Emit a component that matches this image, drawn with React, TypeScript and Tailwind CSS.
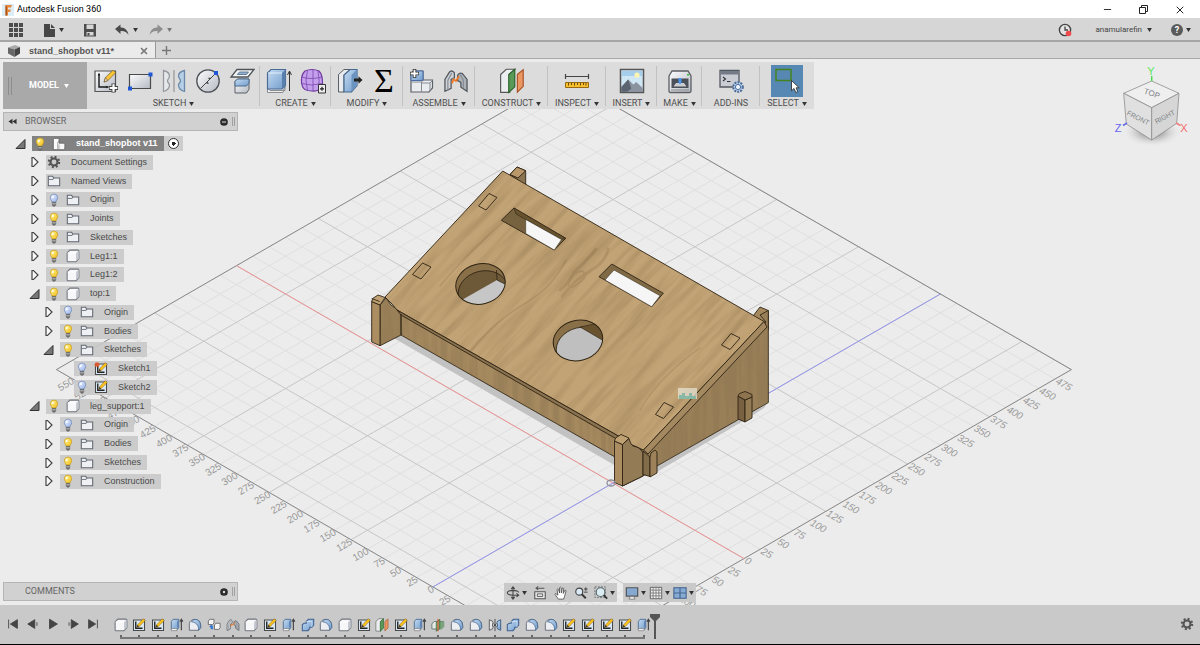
import { ReactNode, useState } from 'react';
import { Minus, X } from 'lucide-react';
import { clsx } from 'clsx';

// Shared gradients and grain, referenced by id from every icon
function SharedDefs() {
  return (
    <svg className="absolute size-0" aria-hidden="true">
      <defs>
        <linearGradient id="metal" x1="0" y1="0" x2="1" y2="1">
          <stop offset="0" stopColor="#fdfdfe" />
          <stop offset="1" stopColor="#b4b9c2" />
        </linearGradient>
        <linearGradient id="steel" x1="0" y1="0" x2="1" y2="1">
          <stop offset="0" stopColor="#c6dcf2" />
          <stop offset="1" stopColor="#6f9bcb" />
        </linearGradient>
        <linearGradient id="bulbOn" x1="0" y1="0" x2="1" y2="1">
          <stop offset="0" stopColor="#fff7a0" />
          <stop offset="1" stopColor="#f3bd12" />
        </linearGradient>
        <linearGradient id="bulbOff" x1="0" y1="0" x2="1" y2="1">
          <stop offset="0" stopColor="#f4f8ff" />
          <stop offset="1" stopColor="#92b0ea" />
        </linearGradient>
      </defs>
    </svg>
  );
}

interface IconProps {
  className?: string;
}

function Svg({ size = 16, className, children }: { size?: number; className?: string; children: ReactNode }) {
  return (
    <svg viewBox={`0 0 ${size} ${size}`} className={clsx('shrink-0', className)} fill="none" aria-hidden="true">
      {children}
    </svg>
  );
}

function Caret({ className = 'text-[#333]' }: IconProps) {
  return (
    <svg viewBox="0 0 6 5" className={clsx('h-[4px] w-[5px] shrink-0', className)} aria-hidden="true">
      <path d="M0 0h6L3 5z" fill="currentColor" />
    </svg>
  );
}

// ---- small icons (16 grid) ----

function Bulb({ on }: { on: boolean }) {
  return (
    <Svg className="size-[14px]">
      <path
        d="M8 1.200a4.200 4.200 0 0 0-4.200 4.200c0 1.900 1.600 2.800 2 5h4.400c.4-2.200 2-3.100 2-5A4.200 4.200 0 0 0 8 1.200z"
        fill={on ? 'url(#bulbOn)' : 'url(#bulbOff)'}
        stroke={on ? '#c99b1c' : '#7288b8'}
        strokeWidth=".9"
      />
      <path d="M6 10.700h4v3L9 15H7l-1-1.300z" fill="#777" stroke="#555" strokeWidth=".6" />
      <path d="M6 12.300h4" stroke="#ddd" strokeWidth=".7" />
      <circle cx="6.700" cy="4.500" r="1.200" fill="#fff" />
    </Svg>
  );
}

function Folder() {
  return (
    <Svg className="size-[14px]">
      <path d="M1.500 13.500v-11h5l1 2h7v9z" fill="#eef0f3" stroke="#626872" strokeWidth="1.200" />
      <path d="M2 6.200h5l1-1.700" stroke="#626872" />
    </Svg>
  );
}

function Cube({ className = 'size-[14px]' }: IconProps) {
  return (
    <Svg className={className}>
      <path d="M1.300 4.500 4.500 1.300h9q1.200 0 1.200 1.200v8.500l-3.200 3.500h-9q-1.200 0-1.200-1.200z" fill="#f7f7f9" stroke="#70747c" strokeWidth="1.200" />
      <path d="M11.500 4.600v9.400l3-3.300V2z" fill="#c3c7cf" />
      <path d="M1.800 4.500h9.700" stroke="#fff" />
    </Svg>
  );
}

function Component() {
  return (
    <Svg className="size-[14px]">
      <path d="M1.500 3 3 1.500h5V7h5.500l1.200 1.200v5L13 14.500H1.500z" fill="#fafafa" stroke="#666" />
      <path d="M8 4.500 6.500 6v8.500M8 8.500v6" stroke="#888" strokeWidth=".8" />
    </Svg>
  );
}

function Gear({ className = 'size-[14px]' }: IconProps) {
  return (
    <Svg className={className}>
      <circle cx="8" cy="8" r="5.800" stroke="#555" strokeWidth="2.600" strokeDasharray="2.200 2.350" />
      <circle cx="8" cy="8" r="4" stroke="#555" strokeWidth="2.400" />
    </Svg>
  );
}

function Sketch({ alert, className = 'size-[15px]' }: IconProps & { alert?: boolean }) {
  return (
    <Svg className={className}>
      <path d="M1.700 2.200h12.600v12H1.700z" fill="#d9e8f4" stroke="#4a4a4a" strokeWidth="1.200" />
      <path d="M4.300 4v7.700H12" stroke="#222" strokeWidth="1.600" />
      <path d="m5.500 10.600.9-2.800L13 .8l2 2-6.800 7z" fill="#ffc61a" stroke="#8a5b13" strokeWidth=".6" />
      <path d="m5.500 10.600.9-2.800 1.800 2z" fill="#333" />
      {alert && <path d="M3.500 0v6M.5 3h6M1.400.9l4.200 4.200M5.600.9 1.400 5.100" stroke="#e0592c" strokeWidth="1.200" />}
    </Svg>
  );
}

function Extrude({ className = 'size-[15px]' }: IconProps) {
  return (
    <Svg className={className}>
      <path d="M1.500 4 3.500 1.500H10V11l-2 2.500H1.500z" fill="url(#steel)" stroke="#4a6891" />
      <path d="M8 4v7l2-2V2z" fill="#5f86b4" />
      <path d="M1.500 12h6.500v2.500H1.500z" fill="#eee" stroke="#777" strokeWidth=".7" />
      <path d="M13 14V2M11.300 4.200 13 1.600l1.700 2.600" stroke="#444" strokeWidth="1.300" />
    </Svg>
  );
}

function Fillet({ className = 'size-[15px]' }: IconProps) {
  return (
    <Svg className={className}>
      <path d="M1.500 14V6.500C2 3 5 1.500 8 1.500c4 0 6.500 3 6.500 6.500v3L12 14z" fill="#eceef1" stroke="#5c6470" />
      <path d="M4 4.300C6 1 10 1.200 12 3c2 1.700 2.500 4 2.500 8L12 14c.5-6-3-9-8-9.700z" fill="url(#steel)" stroke="#486892" strokeWidth=".9" />
    </Svg>
  );
}

function Combine({ className = 'size-[15px]' }: IconProps) {
  return (
    <Svg className={className}>
      <path d="M1.500 7.500 3.500 6H6V4l2.500-2.500H14.500V8l-2 2.500H10V12l-2 2.500H1.500z" fill="url(#steel)" stroke="#3f6092" strokeWidth="1.200" />
      <path d="M6 4h6.500v6.500" stroke="#d5e5f8" strokeWidth=".8" />
    </Svg>
  );
}

function JointOrigin({ className = 'size-[15px]' }: IconProps) {
  return (
    <Svg className={className}>
      <path d="M1.500 3.500 3 1.500h5v4l-1.500 2h-5zM8.500 8 10 6h5v5l-1.500 2h-5z" fill="#f5f5f5" stroke="#666" />
      <path d="M5 9v3h2M3.300 10.500 5 8.500l1.800 2" stroke="#3677cf" strokeWidth="1.500" />
    </Svg>
  );
}

function Joint({ className = 'size-[15px]' }: IconProps) {
  return (
    <Svg className={className}>
      <path d="M1.200 14.300V7L4 2.500q2-1.500 3 .5v3L5 7v5.500z" fill="#cfd2d6" stroke="#555a61" strokeWidth=".8" />
      <path d="M14.800 14.300V7L12 3.500q-2-1-3 1v3.300l2 1v3z" fill="#adb2b9" stroke="#555a61" strokeWidth=".8" />
      <path d="M3 14V7.500L5.500 3M12.500 12.500V7.500L10.500 4" stroke="#858a92" strokeWidth=".7" />
      <path d="m5.500 9.500 1-2.500 1.500 1 1.800-3" stroke="#f07824" strokeWidth="1.100" />
    </Svg>
  );
}

function OffsetPlane({ className = 'size-[15px]' }: IconProps) {
  return (
    <Svg className={className}>
      <path d="M1 4 4.500 .8h5.300L6.600 4v11H1z" fill="#eceef1" stroke="#555" strokeWidth=".7" />
      <path d="m6 4 3.700-3.200v10.800L6 15z" fill="#5a9a58" stroke="#286328" strokeWidth=".7" />
      <path d="m11.300 4 3.600-3v10.300l-3.600 3.500z" fill="#ea9762" stroke="#a85125" strokeWidth=".7" />
    </Svg>
  );
}

function SplitBody({ className = 'size-[15px]' }: IconProps) {
  return (
    <Svg className={className}>
      <path d="M1 6.500 4 4h10.500v6L12 12.500H1z" fill="#e4ece3" stroke="#566" strokeWidth=".9" />
      <path d="M8 4.500 14.500 4v6L12 12.500H8z" fill="#79a779" />
      <path d="m6 5 4-3.500V12l-4 3z" fill="#8eb58a" stroke="#396839" strokeWidth=".9" />
      <path d="M8 1v14" stroke="#dc4b25" strokeWidth="1.200" />
    </Svg>
  );
}

function MirrorSmall({ className = 'size-[15px]' }: IconProps) {
  return (
    <Svg className={className}>
      <path d="M1.500 2 5 3.500q1.500 1.500 0 4.500 1.500 3 0 4.500L1.500 14z" fill="#e4e6e9" stroke="#555" />
      <path d="M14.500 2 11 3.500Q9.500 5 11 8q-1.500 3 0 4.500l3.500 1.500z" fill="url(#steel)" stroke="#35587f" />
      <path d="M8 1v14M6.300 6.300l3.400 3.400M9.700 6.300 6.300 9.700" stroke="#444" />
    </Svg>
  );
}

// ---- ribbon icons (26 grid) ----

function CreateSketch() {
  return (
    <Svg size={26} className="size-[26px]">
      <path d="M2 3h20.500v20.500H2z" fill="url(#metal)" stroke="#555" strokeWidth="1.200" />
      <path d="M6 6v13h8" stroke="#161616" strokeWidth="1.400" />
      <path d="m4.800 7.500 1.200-3 1.200 3zM13.500 17.800l3 1.200-3 1.200z" fill="#161616" />
      <path d="m11 14 1.500-4.300L20 2.200l2.600 2.600-7.700 7.700z" fill="#fbc738" stroke="#84612a" strokeWidth=".8" />
      <path d="m11 14 1.500-4.300 2.400 2.800z" fill="#f6dfb8" stroke="#5d4a2b" strokeWidth=".6" />
      <path d="M20.500 15.500v9M16 20h9" stroke="#444" strokeWidth="4" />
      <path d="M20.500 16.200v7.600M16.700 20h7.600" stroke="#fff" strokeWidth="2.200" />
    </Svg>
  );
}

function Rectangle() {
  return (
    <Svg size={26} className="size-[26px]">
      <path d="M2.500 6.500h21v14h-21z" fill="url(#metal)" stroke="#4a4a4a" strokeWidth="1.200" />
      <path d="M1 18.500h4v4H1zM21.500 4.500h4v4h-4z" fill="#1f58d6" />
    </Svg>
  );
}

function Mirror() {
  return (
    <Svg size={26} className="size-[26px]">
      <path d="M2.500 2.500c4 1 6 3 6 5.500 0 2-2 3-2 5s2 2 2 4c0 3-2.500 5.500-6 6.500z" fill="#e6e7e9" stroke="#96999e" strokeWidth="1.300" />
      <path d="M23.500 2.500c-4 1-6 3-6 5.500 0 2 2 3 2 5s-2 2-2 4c0 3 2.500 5.500 6 6.500z" fill="#b5cfe6" stroke="#6b89a8" strokeWidth="1.300" />
      <path d="M13 2v22" stroke="#999" strokeWidth="1.300" />
    </Svg>
  );
}

function Circle() {
  return (
    <Svg size={26} className="size-[26px]">
      <circle cx="13" cy="13" r="11.200" fill="url(#metal)" stroke="#4e5158" strokeWidth="1.300" />
      <path d="M5.500 20.500 20 6" stroke="#444" />
      <path d="m11.500 16 .6-2.600 2 2zM15.500 9.500l-2.600.6 2 2z" fill="#444" />
      <path d="M19 3h4v4h-4z" fill="#1f58d6" />
    </Svg>
  );
}

function Project() {
  return (
    <Svg size={26} className="size-[26px]">
      <path d="M8 1.500h17L19 9H2z" fill="#f4f5f6" stroke="#4f5359" strokeWidth="1.300" />
      <path d="M10.500 4h9l-2 2.500H8.300z" fill="#91b3d6" stroke="#53687c" strokeWidth=".8" />
      <path d="M6 13.500 8.500 11H20v10.500L17.500 25H6z" fill="url(#metal)" stroke="#5a5e65" />
      <path d="M6 13.500 8.500 11H20v4l-2.500 3H6z" fill="url(#steel)" stroke="#4d6c90" />
    </Svg>
  );
}

function ExtrudeLarge() {
  return (
    <Svg size={26} className="size-[26px]">
      <path d="M1.500 20 4 22.500h15v-4L17 24.500H1.500z" fill="#eee" stroke="#8b8e93" />
      <path d="M1.500 5 5 1.500h14.500v16L16 21H1.500z" fill="url(#steel)" stroke="#4a6b93" strokeWidth="1.200" />
      <path d="m16 5 3.500-3.500v16L16 21z" fill="#587fae" />
      <path d="M2 5h14" stroke="#e3effb" />
      <path d="M23.500 23V4M21.500 7l2-4 2 4" stroke="#333" />
    </Svg>
  );
}

function Form() {
  return (
    <Svg size={26} className="size-[26px]">
      <path d="M5 3q7-3 14 0 4 4 3.500 15Q19 24 12 23 3 23 2 17 0 8 5 3z" fill="#c49fec" stroke="#6e399f" strokeWidth="1.200" />
      <path d="M2 9q8 3 20 0M1.500 15.500q10 3 21 0M7.500 2.300q-3 10 0 20M13 2q0 10 0 21M18 3q2 10 .5 18" stroke="#8250b5" strokeWidth=".9" />
      <path d="M18.500 16.500h7v8.500h-7z" fill="#eee" stroke="#333" />
      <path d="M20 20.800h4M22 18.800v4" stroke="#222" strokeWidth="1.200" />
    </Svg>
  );
}

function PressPull() {
  return (
    <Svg size={26} className="size-[26px]">
      <path d="M1.500 6.500 7 1.500h6l-6 5.500v17H1.500z" fill="#e9ebee" stroke="#5b6066" />
      <path d="m7 7 6-5.500h7v16L14.500 24H7z" fill="url(#steel)" stroke="#44688f" strokeWidth="1.200" />
      <path d="m14.500 7 5.500-5.500v16L14.500 24z" fill="#6c94c1" />
      <path d="M17 10.500h4.500V8.300l4 3.700-4 3.700v-2.200H17z" fill="#222" />
    </Svg>
  );
}

function NewComponent() {
  return (
    <Svg size={26} className="size-[26px]">
      <path d="M2 5.500 4.500 3H14v9h9.500V20L20 24H2z" fill="#e9ebef" stroke="#5c6068" strokeWidth="1.200" />
      <path d="M2 5.500 4.500 3H14v9.500H2z" fill="url(#steel)" stroke="#4b6da8" />
      <path d="M12.500 14v10M2 14h10.500l2-2M12.500 15h8.500l2.500-2.500M21 15v8" stroke="#868b94" />
      <path d="M5.500 1v9M1 5.500h9" stroke="#333" strokeWidth="3.600" />
      <path d="M5.500 1.700v7.600M1.700 5.500h7.600" stroke="#fff" strokeWidth="1.800" />
    </Svg>
  );
}

function Measure() {
  return (
    <Svg size={26} className="size-[26px]">
      <path d="M1.500 6v5M24.500 6v5M1.500 8.500h23" stroke="#444" strokeWidth="1.200" />
      <path d="M1.500 14.500h23v5h-23z" fill="#f8c02f" stroke="#966a12" />
      <path d="M4.500 15v2.500M7.500 15v2M10.500 15v2.500M13.500 15v2M16.500 15v2.500M19.500 15v2M22 15v2.500" stroke="#6a4a0c" />
    </Svg>
  );
}

function Picture() {
  return (
    <Svg size={26} className="size-[26px]">
      <path d="M1.500 1.500h23v23h-23z" fill="#cfe6f5" stroke="#555" strokeWidth="1.500" />
      <path d="M3 3h20v5H3z" fill="#a5cdec" />
      <circle cx="18" cy="7" r="2.600" fill="#fff5b0" />
      <path d="m2.300 19 7-7.500 5 5 3-2.500 6.400 6v4H2.300z" fill="#8b939e" />
      <path d="m2.300 19 7-7.500 3 9-4 3.300h-6z" fill="#5a6370" />
    </Svg>
  );
}

function Printer() {
  return (
    <Svg size={26} className="size-[26px]">
      <path d="m2 8 3-5h16l3 5v15q0 1.500-1.500 1.500h-19Q2 24.500 2 23z" fill="url(#metal)" stroke="#5b5e63" strokeWidth="1.300" />
      <path d="M4.500 10.500h17V20h-17z" fill="#4b4f57" />
      <path d="M6.500 18.500 9 15h8l2.500 3.500z" fill="#c9ccd2" />
      <path d="M11.500 10h3v4.500L13 16.500l-1.500-2z" fill="#4a94ec" />
      <path d="M20 6h2v1.500h-2z" fill="#35c235" />
      <path d="M4 22h18" stroke="#888" />
    </Svg>
  );
}

function Scripts() {
  return (
    <Svg size={26} className="size-[26px]">
      <path d="M2 2.500h19V19H2z" fill="#c9ccd3" stroke="#545962" strokeWidth="1.300" />
      <path d="M2.500 3h18v3.500h-18z" fill="#747b87" />
      <path d="m5 9 2.500 2L5 13M9 13.500h3.500" stroke="#333" strokeWidth="1.100" />
      <circle cx="20" cy="19" r="4.700" fill="#d4e4fa" stroke="#496c9d" strokeWidth="2.200" strokeDasharray="2 1" />
      <circle cx="20" cy="19" r="2.600" fill="#eef5ff" stroke="#496c9d" />
    </Svg>
  );
}

function SelectArrow() {
  return (
    <Svg size={30} className="size-[30px]">
      <path d="M4 3.500h15v11H4z" stroke="#44821f" strokeWidth="1.500" />
      <path d="M19.500 14.500v10.300l2.500-2.300 1.800 4 2-.9-1.800-3.800h3.200z" fill="#fff" stroke="#333" strokeWidth=".9" />
    </Svg>
  );
}

// ---- ribbon ----

interface RibbonGroupProps {
  label: string;
  width: string;
  menu?: boolean;
  selected?: boolean;
  tools: { name: string; icon: ReactNode }[];
}

const RIBBON: RibbonGroupProps[] = [
  {
    label: 'SKETCH',
    width: 'w-[173px]',
    menu: true,
    tools: [
      { name: 'Create sketch', icon: <CreateSketch /> },
      { name: 'Rectangle', icon: <Rectangle /> },
      { name: 'Mirror', icon: <Mirror /> },
      { name: 'Circle', icon: <Circle /> },
      { name: 'Project', icon: <Project /> },
    ],
  },
  {
    label: 'CREATE',
    width: 'w-[71px]',
    menu: true,
    tools: [
      { name: 'Extrude', icon: <ExtrudeLarge /> },
      { name: 'Create form', icon: <Form /> },
    ],
  },
  {
    label: 'MODIFY',
    width: 'w-[72px]',
    menu: true,
    tools: [
      { name: 'Press pull', icon: <PressPull /> },
      {
        name: 'Parameters',
        icon: <span className="w-[26px] text-center font-['Liberation_Serif',serif] text-[34px] leading-[26px] text-black">Σ</span>,
      },
    ],
  },
  {
    label: 'ASSEMBLE',
    width: 'w-[72px]',
    menu: true,
    tools: [
      { name: 'New component', icon: <NewComponent /> },
      { name: 'Joint', icon: <Joint className="size-[26px]" /> },
    ],
  },
  { label: 'CONSTRUCT', width: 'w-[73px]', menu: true, tools: [{ name: 'Offset plane', icon: <OffsetPlane className="size-[26px]" /> }] },
  { label: 'INSPECT', width: 'w-[58px]', menu: true, tools: [{ name: 'Measure', icon: <Measure /> }] },
  { label: 'INSERT', width: 'w-[51px]', menu: true, tools: [{ name: 'Attached canvas', icon: <Picture /> }] },
  { label: 'MAKE', width: 'w-[45px]', menu: true, tools: [{ name: '3D print', icon: <Printer /> }] },
  { label: 'ADD-INS', width: 'w-[58px]', tools: [{ name: 'Scripts and add-ins', icon: <Scripts /> }] },
  { label: 'SELECT', width: 'w-[54px]', menu: true, selected: true, tools: [{ name: 'Select', icon: <SelectArrow /> }] },
];

function RibbonGroup({ label, width, menu, selected, tools }: RibbonGroupProps) {
  return (
    <div className={clsx('relative flex flex-col items-center justify-between pt-[3px]', width)}>
      <div className="flex h-[32px] items-center gap-[8px]">
        {tools.map((tool) => (
          <button key={tool.name} aria-label={tool.name} className={clsx('flex items-center', selected && 'bg-[#5788b3] p-px')}>
            {tool.icon}
          </button>
        ))}
      </div>
      <button className="flex items-center gap-[3px] text-[9px] leading-[11px] whitespace-nowrap text-[#4f4f4f]">
        {label}
        {menu && <Caret />}
      </button>
      {!selected && <span className="absolute top-[4px] right-0 h-[40px] w-px bg-[#c2c2c2]" />}
    </div>
  );
}

function Ribbon() {
  return (
    <nav aria-label="Tools" className="relative ml-[3px] flex h-[47px] w-max bg-[#dcdcdc]">
      <button className="flex w-[84px] items-center bg-[#a9a9a9] text-[9px] font-bold text-white">
        <span className="ml-[5px] h-[18px] w-[4px] border-x border-[#8d8d8d]" />
        <span className="ml-[17px]">MODEL</span>
        <Caret className="ml-[5px] text-white" />
      </button>
      {RIBBON.map((group) => (
        <RibbonGroup key={group.label} {...group} />
      ))}
    </nav>
  );
}

// ---- browser tree ----

type NodeKind = 'root' | 'settings' | 'views' | 'folder' | 'body' | 'sketch' | 'sketchAlert';

interface TreeNode {
  label: string;
  kind: NodeKind;
  level: number;
  open?: boolean;
  visible?: boolean;
}

const TREE: TreeNode[] = [
  { label: 'stand_shopbot v11', kind: 'root', level: 0, open: true, visible: true },
  { label: 'Document Settings', kind: 'settings', level: 1 },
  { label: 'Named Views', kind: 'views', level: 1 },
  { label: 'Origin', kind: 'folder', level: 1, visible: false },
  { label: 'Joints', kind: 'folder', level: 1, visible: true },
  { label: 'Sketches', kind: 'folder', level: 1, visible: true },
  { label: 'Leg1:1', kind: 'body', level: 1, visible: true },
  { label: 'Leg1:2', kind: 'body', level: 1, visible: true },
  { label: 'top:1', kind: 'body', level: 1, open: true, visible: true },
  { label: 'Origin', kind: 'folder', level: 2, visible: false },
  { label: 'Bodies', kind: 'folder', level: 2, visible: true },
  { label: 'Sketches', kind: 'folder', level: 2, open: true, visible: true },
  { label: 'Sketch1', kind: 'sketchAlert', level: 3, visible: false },
  { label: 'Sketch2', kind: 'sketch', level: 3, visible: false },
  { label: 'leg_support:1', kind: 'body', level: 1, open: true, visible: true },
  { label: 'Origin', kind: 'folder', level: 2, visible: false },
  { label: 'Bodies', kind: 'folder', level: 2, visible: true },
  { label: 'Sketches', kind: 'folder', level: 2, visible: true },
  { label: 'Construction', kind: 'folder', level: 2, visible: true },
];

const INDENT = ['pl-[15px]', 'pl-[29px]', 'pl-[43px]', 'pl-[57px]'];

const KIND_ICON: Record<NodeKind, ReactNode> = {
  root: <Component />,
  settings: <Gear />,
  views: <Folder />,
  folder: <Folder />,
  body: <Cube />,
  sketch: <Sketch className="size-[14px]" />,
  sketchAlert: <Sketch alert className="size-[14px]" />,
};

function Expander({ open, label }: { open?: boolean; label: string }) {
  return (
    <button aria-label={`Toggle ${label}`} aria-expanded={!!open} className="flex w-[17px] shrink-0">
      <Svg size={12} className="size-[12px]">
        {open ? (
          <path d="M10 1.500v9H1z" fill="#777" stroke="#333" />
        ) : (
          <path d="M3 1.500h1.500l4.500 4.500-4.500 4.500H3z" fill="#f8f8f8" stroke="#444" strokeWidth="1.200" />
        )}
      </Svg>
    </button>
  );
}

function TreeRow({ node }: { node: TreeNode }) {
  const isRoot = node.kind === 'root';
  const [visible, setVisible] = useState(node.visible);

  return (
    <li className={clsx('flex h-[15px] items-center', INDENT[node.level])}>
      {node.level < 3 ? <Expander open={node.open} label={node.label} /> : <span className="w-[17px]" />}
      <div
        className={clsx(
          "flex h-[15px] items-center pr-[6px] pl-px font-['Liberation_Sans',sans-serif] text-[9px] leading-[15px]",
          isRoot ? 'bg-[#828282] font-bold text-white' : 'bg-[#c9c9c9]/90 text-[#4a4a4a]'
        )}
      >
        {visible !== undefined && (
          <button aria-label={`Visibility of ${node.label}`} onClick={() => setVisible(!visible)} className="mr-[5px]">
            <Bulb on={visible} />
          </button>
        )}
        {KIND_ICON[node.kind]}
        <span className="ml-[10px] whitespace-nowrap">{node.label}</span>
      </div>
      {isRoot && (
        <span className="flex h-[15px] w-[19px] items-center justify-center bg-[#cdcdcd]">
          <input
            type="radio"
            name="active"
            aria-label="Activate component"
            defaultChecked
            className="size-[11px] appearance-none rounded-full border border-[#333] bg-[radial-gradient(circle,#222_2px,#fff_2px)]"
          />
        </span>
      )}
    </li>
  );
}

function PanelHeader({ title, collapsed }: { title: string; collapsed?: boolean }) {
  return (
    <div className="flex h-[19px] w-[235px] items-center border border-[#b5b5b5] bg-[#d1d1d1] pr-[2px] pl-[4px]">
      <span className="w-[17px]">
        {!collapsed && (
          <Svg size={10} className="size-[9px]">
            <path d="M5 2v6L.5 5zM9.500 2v6L5 5z" fill="#333" />
          </Svg>
        )}
      </span>
      <h2 className="flex-1 text-[9px] text-[#666]">{title}</h2>
      <button aria-label={`${title} options`} className="mr-[4px]">
        <Svg size={10} className="size-[8px]">
          <circle cx="5" cy="5" r="4.800" fill="#2c2c2c" />
          {collapsed ? <circle cx="5" cy="5" r="1.500" fill="#ddd" /> : <path d="M2.500 5h5" stroke="#ddd" strokeWidth="1.300" />}
        </Svg>
      </button>
      <span className="h-[9px] w-[3px] border-x border-[#a0a0a0]" />
    </div>
  );
}

// ---- 3D canvas ----

// One grid cell is 25 mm; u follows the red axis, v the blue one.
const CELL_X = 16.37;
const CELL_Y = 9.45;
const ORIGIN = { x: 613, y: 483 };
const U_MIN = -23;
const U_MAX = 8;
const V_MIN = -11;
const V_MAX = 20;

function project(u: number, v: number) {
  return { x: ORIGIN.x + (u + v) * CELL_X, y: ORIGIN.y + (u - v) * CELL_Y };
}

function range(from: number, to: number) {
  return Array.from({ length: to - from + 1 }, (_, i) => from + i);
}

function GridLine({ from, to, color }: { from: [number, number]; to: [number, number]; color: string }) {
  const a = project(...from);
  const b = project(...to);
  return <line x1={a.x} y1={a.y} x2={b.x} y2={b.y} stroke={color} />;
}

function Grid() {
  const us = range(U_MIN, U_MAX);
  const vs = range(V_MIN, V_MAX);
  const isMajor = (n: number) => n % 5 === 0;

  return (
    <g>
      {[false, true].map((major) => (
        <g key={String(major)}>
          {us.filter((u) => isMajor(u) === major).map((u) => (
            <GridLine key={u} from={[u, V_MIN]} to={[u, V_MAX]} color={major ? '#c6c6c6' : '#dfdfdf'} />
          ))}
          {vs.filter((v) => isMajor(v) === major).map((v) => (
            <GridLine key={v} from={[U_MIN, v]} to={[U_MAX, v]} color={major ? '#c6c6c6' : '#dfdfdf'} />
          ))}
        </g>
      ))}
      <GridLine from={[U_MIN, V_MIN]} to={[U_MAX, V_MIN]} color="#888" />
      <GridLine from={[U_MIN, V_MAX]} to={[U_MAX, V_MAX]} color="#888" />
      <GridLine from={[U_MIN, V_MIN]} to={[U_MIN, V_MAX]} color="#888" />
      <GridLine from={[U_MAX, V_MIN]} to={[U_MAX, V_MAX]} color="#888" />
      <GridLine from={[U_MIN, 0]} to={[U_MAX, 0]} color="#f09494" />
      <GridLine from={[0, V_MIN]} to={[0, V_MAX]} color="#9494ee" />

      <g fill="#999" fontSize="10" fontFamily="'Liberation Sans', sans-serif">
        {range(-22, 1).map((u) => {
          const p = project(u, V_MIN);
          return (
            <text key={u} transform={`translate(${p.x + 2} ${p.y + 4}) rotate(-30)`} textAnchor="end">
              {Math.abs(u * 25)}
            </text>
          );
        })}
        {range(-4, 19).map((v) => {
          const p = project(U_MAX, v);
          return (
            <text key={v} transform={`translate(${p.x} ${p.y + 4}) rotate(30)`} fontStyle="italic">
              {Math.abs(v * 25)}
            </text>
          );
        })}
      </g>
    </g>
  );
}

const TOP_FACE = 'M502.700 171 764 321.500 643.500 450 630 444 620 437 397 310 392 304 385 297z';
const SIDE_FACE = 'M643 450 766 322 760 315 768.300 310.500V402.500L657 466 643 476 622.500 486V444L629 438.500 634 446z';
const FRONT_FACE = 'M398 311 620 438V460L614.500 456.700 401 335z';

function WoodModel() {
  return (
    <g strokeLinejoin="round">
      <defs>
        <filter id="grain" x="0" y="0" width="100%" height="100%">
          <feTurbulence type="fractalNoise" baseFrequency="0.012 0.13" numOctaves="4" seed="7" />
          <feColorMatrix values="0 0 0 0 .3  0 0 0 0 .2  0 0 0 0 .09  2.600 0 0 0 -1.050" />
        </filter>
        {/* upright grain for the walls */}
        <filter id="wallGrain" x="0" y="0" width="100%" height="100%">
          <feTurbulence type="fractalNoise" baseFrequency="0.15 0.012" numOctaves="4" seed="3" />
          <feColorMatrix values="0 0 0 0 .25  0 0 0 0 .17  0 0 0 0 .08  3 0 0 0 -1.100" />
        </filter>
        <clipPath id="topClip"><path d={TOP_FACE} /></clipPath>
        <clipPath id="wallClip"><path d={`${SIDE_FACE}${FRONT_FACE}M380 305 386 298 401 314V335L380 345.700z`} /></clipPath>
        <clipPath id="hole1"><ellipse cx="480.500" cy="284" rx="25" ry="20" transform="rotate(-14 480.500 284)" /></clipPath>
        <clipPath id="hole2"><ellipse cx="578" cy="340.500" rx="25" ry="20" transform="rotate(-14 578 340.500)" /></clipPath>
      </defs>

      {/* ground shadow */}
      <path d="M392 337 401 335 614.500 456v9zM657 466 768 402.500 764 408 750 417 655 473z" fill="#c2c2c2" />

      <g stroke="#2e2414" strokeWidth=".9">
        {/* tabs behind the top plate */}
        <path d="M510 174.500 517 167 525.700 170.700V186z" fill="#8a7350" />
        <path d="M510 174.500 517 167 525.700 170.700 518 178z" fill="#b8976a" />
        <path d="m753 316 7-9 8.300 3.500V330z" fill="#a6885f" />

        <path d={SIDE_FACE} fill="#9a8059" />
        <path d={FRONT_FACE} fill="#a5895f" />
        <path d="M380 305 386 298 391 305 397 309 401 314V335L380 345.700z" fill="#9a8059" />
      </g>
      <g clipPath="url(#wallClip)">
        <rect x="360" y="280" width="420" height="220" filter="url(#wallGrain)" opacity=".4" />
      </g>

      {/* top plate */}
      <path d={TOP_FACE} fill="#c2a375" />
      <g clipPath="url(#topClip)">
        <g transform="translate(570 310) rotate(-47)">
          <rect x="-230" y="-230" width="460" height="460" filter="url(#grain)" opacity=".42" />
        </g>
        <g stroke="#65482a" strokeLinecap="round" opacity=".16" fill="none">
          <path d="M562 296q12-16 28-25t18-22M560 290q10-8 14-18 12-10 22-23" strokeWidth="3" />
          <path d="M470 352q24-30 54-48t42-44M440 286q26-32 66-66M640 410q20-34 60-62" strokeWidth="1.500" />
          <path d="M568 284q3-12 14-13 7 4-3 12t-11 1z" strokeWidth="1.500" />
        </g>
      </g>

      <g stroke="#2e2414" strokeWidth=".9">
        <path d={TOP_FACE} fill="none" />
        {/* plate thickness */}
        <path d="m764 321.500 3 5.500L648 454l-4.500-4z" fill="#a48960" />
        <path d="m397 310 223 127v4L401 315z" fill="#8b7350" />
        <path d="M401 335V314" />

        {/* legs */}
        <path d="m371.700 301.500 8.300 3.500v40.700l-8.300-3.700z" fill="#ac8d62" />
        <path d="m371.700 301.500 1-3 5.300-3.500 7 2.500-5 7.500z" fill="#c0a173" />
        <path d="m371.700 298.500 8 3" />
        <path d="m614.500 441 8 3.500V486l-8-3.500z" fill="#ac8d62" />
        <path d="m614.500 441 1-3 5.500-3.500 8 3.500-6.500 6.500z" fill="#c0a173" />
        <path d="M629 438.500q2 8 6 8t8 6V476L622.500 486V444.500z" fill="#937b55" />

        {/* tenons through the side */}
        <path d="m643 451 7 6v19.500l-7-2z" fill="#826b48" />
        <path d="m650 457 1-4 4-3 2 2v21l-7 4z" fill="#9c8159" />
        <path d="m738 396 7 4v22l-7-3z" fill="#786241" />
        <path d="m745 400 7-3v21l-7 4z" fill="#957b53" />
        <path d="m738 396 1.500-2.500 5.500-2 7 3v2.500l-7 3z" fill="#8f754f" />

        {/* tenons flush with the plate */}
        <g fill="none">
          <path d="m489 193.500 8 4L486 210l-7.500-4z" />
          <path d="m422.500 263 8.500 4-10 12-8.500-4.500z" />
          <path d="m731 333.500 9 4.500-10 11.500-8.500-4.500z" />
          <path d="m664 402.500 9.500 4.500-10 11.500-8-4z" />
        </g>

        {/* slots */}
        <path d="m514 208 51.700 30.300L554.300 250l-53-29.700z" fill="#77623f" />
        <path d="m514 208 51.700 30.300-4.200 1.200-35.800-20-9.700-5.500z" fill="#68532f" strokeWidth=".6" />
        <path d="m525.700 219.500 35.800 20-7.200 10.500-28.600-16.500z" fill="#f6f6f6" strokeWidth=".5" />
        <path d="m611.700 264 51.600 29.300-11.600 13.400L599 276.700z" fill="#806a45" />
        <path d="m614 270 46 25.700-8.300 11-46.700-26.700z" fill="#f6f6f6" strokeWidth=".5" />
      </g>

      {/* round openings */}
      <g clipPath="url(#hole1)">
        <path d="M450 260h60v50h-60z" fill="#8a7048" />
        <ellipse cx="483" cy="291" rx="25" ry="20" transform="rotate(-14 483 291)" fill="#6d5837" stroke="#2e2414" strokeWidth=".8" />
        <path d="M460 301 497 280 507 285V310H460z" fill="#c6c6c6" />
        <path d="m496.500 270 .5 10 10 5" fill="none" stroke="#2e2414" strokeWidth=".8" />
      </g>
      <g clipPath="url(#hole2)">
        <path d="M550 315h60v50h-60z" fill="#8a7048" />
        <ellipse cx="581" cy="347.500" rx="25" ry="20" transform="rotate(-14 581 347.500)" fill="#bfbfbf" stroke="#2e2414" strokeWidth=".8" />
        <path d="m580 327 24 14V322z" fill="#69522f" stroke="#2e2414" strokeWidth=".6" />
      </g>
      <g fill="none" stroke="#2e2414">
        <ellipse cx="480.500" cy="284" rx="25" ry="20" transform="rotate(-14 480.500 284)" />
        <ellipse cx="578" cy="340.500" rx="25" ry="20" transform="rotate(-14 578 340.500)" />
      </g>

      {/* joint glyph and origin marker */}
      <path d="M678 388h19v11h-19z" fill="#e6e2d2" opacity=".75" />
      <path d="M679 399v-4h3v-2h3v3h4v-3h3v3h4v3z" fill="#7fb5a4" opacity=".9" />
      <ellipse cx="611" cy="483" rx="4" ry="3" fill="none" stroke="#8f8f9c" strokeWidth="1.300" />
    </g>
  );
}

function ViewCube() {
  return (
    <svg viewBox="1112 62 80 90" className="h-[90px] w-[80px]" role="img" aria-label="View cube">
      <defs>
        <radialGradient id="cubeShadow">
          <stop offset=".3" stopColor="#777" stopOpacity=".6" />
          <stop offset="1" stopColor="#ececec" stopOpacity="0" />
        </radialGradient>
      </defs>
      <ellipse cx="1152" cy="132" rx="30" ry="15" fill="url(#cubeShadow)" />
      <g stroke="#8d8d8d" strokeWidth=".8" strokeLinejoin="round">
        <path d="m1151.700 81 27.300 12.300-27.300 14.400-28-14.400z" fill="#efefef" />
        <path d="m1123.700 93.300 28 14.400V140l-25.400-16z" fill="#e0e0e0" />
        <path d="m1179 93.300-27.300 14.400V140l25-16.700z" fill="#d6d6d6" />
      </g>
      <g fill="#808488" fontSize="8" fontFamily="'Liberation Sans', sans-serif" textAnchor="middle">
        <text transform="translate(1151 96) rotate(20)">TOP</text>
        <text transform="translate(1137 120) rotate(27)" fontSize="7">FRONT</text>
        <text transform="translate(1166 119) rotate(-28)" fontSize="7">RIGHT</text>
      </g>
      <path d="M1151.700 76v5" stroke="#4be04b" strokeWidth="1.500" />
      <path d="m1123 125.500 4-2.500" stroke="#6a6ae8" strokeWidth="1.500" />
      <path d="m1176 123 4.500 2.500" stroke="#ef7b7b" strokeWidth="1.500" />
      <g fontSize="11" fontFamily="'Liberation Sans', sans-serif" textAnchor="middle">
        <text x="1151" y="75" fill="#5de85d">Y</text>
        <text x="1118" y="132" fill="#6464ee">Z</text>
        <text x="1184" y="132" fill="#f26d6d">X</text>
      </g>
    </svg>
  );
}

// ---- view controls under the canvas ----

function NavButton({ name, menu, children }: { name: string; menu?: boolean; children: ReactNode }) {
  return (
    <button aria-label={name} className="flex items-center gap-[2px]">
      <Svg className="size-[14px]">{children}</Svg>
      {menu && <Caret />}
    </button>
  );
}

function ViewControls() {
  return (
    <div className="absolute inset-x-0 bottom-[3px] flex justify-center gap-[6px]">
      <div className="flex h-[19px] w-[113px] items-center justify-between bg-[#c9c9c9] px-[2px]">
        <NavButton name="Orbit" menu>
          <path d="M8 1v14M6 3.500 8 1l2 2.500M6 12.500 8 15l2-2.500M14.500 7.500c0-1.500-3-2.500-6.500-2.500S1.500 6 1.500 7.500 4 10.500 8 10.500h6M12 8.500l2.500 2-2.500 2" stroke="#444" strokeWidth="1.200" />
        </NavButton>
        <NavButton name="Look at">
          <path d="M2 6.500h12v8H2z" fill="#e8e8e8" stroke="#555" strokeWidth="1.200" />
          <path d="M5 9h6v3H5z" stroke="#555" />
          <path d="M4 2.500h9M6 .5l-2.500 2L6 4.500" stroke="#555" strokeWidth="1.200" />
        </NavButton>
        <NavButton name="Pan">
          <path d="M5 15 1 9.300q.5-1.500 2 0l1.500 1.200L3.500 4q.7-1.500 1.700 0l1.300 4-.3-6q1-1.500 1.800 0l.5 5.800 1-5.300q1.300-1 1.600.4l-.5 5.600 1.800-3.500q1.400-.5 1.300 1L12 12l-1 3z" fill="#fff" stroke="#444" strokeWidth=".9" />
        </NavButton>
        <NavButton name="Zoom">
          <circle cx="6" cy="6.500" r="4" fill="#dceaf5" stroke="#444" strokeWidth="1.300" />
          <path d="m9 9.500 4.500 4.500" stroke="#333" strokeWidth="2.200" />
          <path d="M11.500 3.500h4M13.500 1.500v4M11.500 7h4" stroke="#333" />
        </NavButton>
        <NavButton name="Fit" menu>
          <path d="M1 1h12v12H1z" stroke="#666" strokeDasharray="2 1.500" />
          <circle cx="7.500" cy="7" r="5" fill="#dcecf4" stroke="#566" strokeWidth="1.300" />
          <path d="m11 10.500 4 4" stroke="#333" strokeWidth="2.200" />
        </NavButton>
      </div>
      <div className="flex h-[19px] w-[73px] items-center justify-between bg-[#c9c9c9] px-[2px]">
        <NavButton name="Display settings" menu>
          <path d="M1.500 2h13v9.500h-13z" fill="#86a9d2" stroke="#555" strokeWidth="1.400" />
          <path d="M6 12h4l1.500 3h-7z" fill="#eee" stroke="#666" strokeWidth=".8" />
        </NavButton>
        <NavButton name="Grid and snaps" menu>
          <path d="M1.500 1.500h13v13h-13z" fill="#f2f2f2" stroke="#555" />
          <path d="M4.700 2v12M8 2v12M11.300 2v12M2 4.700h12M2 8h12M2 11.300h12" stroke="#777" />
        </NavButton>
        <NavButton name="Viewports" menu>
          <path d="M1 2h14v12H1z" fill="#86abd5" stroke="#40618a" strokeWidth="1.200" />
          <path d="M8 2v12M1 8h14" stroke="#49698f" strokeWidth="1.400" />
        </NavButton>
      </div>
    </div>
  );
}

// ---- timeline ----

interface Feature {
  name: string;
  Icon: (props: IconProps) => ReactNode;
}

const component: Feature = { name: 'Component', Icon: Cube };
const sketch: Feature = { name: 'Sketch', Icon: Sketch };
const extrude: Feature = { name: 'Extrude', Icon: Extrude };
const fillet: Feature = { name: 'Fillet', Icon: Fillet };
const combine: Feature = { name: 'Combine', Icon: Combine };

const FEATURES: Feature[] = [
  component,
  sketch,
  sketch,
  extrude,
  fillet,
  { name: 'Joint origin', Icon: JointOrigin },
  { name: 'Joint', Icon: Joint },
  component,
  sketch,
  extrude,
  combine,
  fillet,
  component,
  sketch,
  { name: 'Plane', Icon: OffsetPlane },
  sketch,
  extrude,
  { name: 'Split body', Icon: SplitBody },
  fillet,
  fillet,
  { name: 'Mirror', Icon: MirrorSmall },
  combine,
  fillet,
  fillet,
  sketch,
  sketch,
  sketch,
  sketch,
  extrude,
];

const PLAYBACK = [
  { name: 'Go to start', d: 'M3 3v10M13 3v10L5 8z' },
  { name: 'Step back', d: 'M10 3v10L2 8zM12.500 6v4' },
  { name: 'Play', d: 'M4 2.500v11L13 8z' },
  { name: 'Step forward', d: 'M6 3v10l8-5zM3.500 6v4' },
  { name: 'Go to end', d: 'M13 3v10M3 3v10l8-5z' },
];

function Timeline() {
  return (
    <footer className="flex h-[40px] shrink-0 items-start border-b border-black bg-[#c9c9c9] pr-[6px] pl-[6px]">
      <div className="mt-[12px] flex gap-[6px]">
        {PLAYBACK.map(({ name, d }) => (
          <button key={name} aria-label={name}>
            <Svg className="size-[14px]">
              <path d={d} fill="#444" stroke="#444" />
            </Svg>
          </button>
        ))}
      </div>
      <div className="relative mt-[12px] ml-[13px] flex w-[539px] justify-between">
        {FEATURES.map(({ name, Icon }, i) => (
          <button key={i} aria-label={name} className="flex w-[15px] flex-col items-center">
            <span className="flex h-[15px] items-center">
              <Icon className="size-[14px]" />
            </span>
            <span className="mt-[3px] h-[3px] w-[2px] bg-[#666]" />
          </button>
        ))}
        <span className="absolute right-[7px] bottom-[-1px] left-[7px] h-[2px] bg-[#777]" />
      </div>
      <svg viewBox="0 0 10 25" className="-ml-[2px] mt-[9px] h-[25px] w-[10px]" aria-hidden="true">
        <path d="M0 0h10v3L6 7v18H4V7L0 3z" fill="#555" />
      </svg>
      <button aria-label="Timeline settings" className="mt-[12px] ml-auto">
        <Gear />
      </button>
    </footer>
  );
}

// ---- window chrome ----

function TitleBar() {
  return (
    <header className="flex h-[18px] shrink-0 items-center bg-white pt-px pr-[14px] pl-[2px]">
      <Svg size={12} className="size-[12px]">
        <path d="M0 0h12v12H0z" fill="#dcedf5" />
        <path d="M3.500 1h6.500L9 3.500H6v2h3L8 8H6v3.500H3.500z" fill="#e8873a" />
        <path d="M3.500 1 5 3v8.500H3.500z" fill="#a95418" />
      </Svg>
      <h1 className="ml-[3px] text-[9px] text-black">Autodesk Fusion 360</h1>
      <div className="ml-auto flex items-center gap-[25px] text-[#222]">
        <button aria-label="Minimize"><Minus className="size-[11px]" strokeWidth={2} /></button>
        <button aria-label="Restore">
          <Svg size={11} className="size-[11px]">
            <path d="M1.500 3.500h6v6h-6zM3.500 3V1.500h6v6H8" stroke="#222" />
          </Svg>
        </button>
        <button aria-label="Close"><X className="size-[12px]" strokeWidth={2} /></button>
      </div>
    </header>
  );
}

function QuickAccess() {
  return (
    <div className="flex h-[24px] shrink-0 items-center border-b-2 border-[#a5a5a5] bg-[#d6d6d6] pt-[2px] pr-[9px] pl-[9px]">
      <button aria-label="Data panel">
        <Svg size={14} className="size-[14px]">
          <path d="M0 0h4v4H0zM5 0h4v4H5zM10 0h4v4h-4zM0 5h4v4H0zM5 5h4v4H5zM10 5h4v4h-4zM0 10h4v4H0zM5 10h4v4H5zM10 10h4v4h-4z" fill="#4d4d4d" />
        </Svg>
      </button>
      <button aria-label="File" className="ml-[19px] flex items-center gap-[3px]">
        <Svg size={14} className="size-[14px]">
          <path d="M2 1h6v5h5v8H2z" fill="#474747" />
          <path d="m9 1 4 4H9z" fill="#474747" />
        </Svg>
        <Caret />
      </button>
      <button aria-label="Save" className="ml-[19px]">
        <Svg size={14} className="size-[14px]">
          <path d="M1 1h12v12.500H1z" fill="#4d4d4d" />
          <path d="M3.500 1.500h7v4.500h-7zM3.500 9h7v3.500h-7z" fill="#d6d6d6" />
          <path d="M4.500 10h2v2.500h-2z" fill="#4d4d4d" />
        </Svg>
      </button>
      <button aria-label="Undo" className="ml-[18px] flex items-center gap-[4px]">
        <Svg size={14} className="size-[14px]">
          <path d="M0 6 5.500 1.500V4.500Q12 4 13.500 12 11 7.500 5.500 8v3z" fill="#4a4a4a" />
        </Svg>
        <Caret />
      </button>
      <button aria-label="Redo" className="ml-[11px] flex items-center gap-[4px]">
        <Svg size={14} className="size-[14px]">
          <path d="M14 6 8.500 1.500V4.500Q2 4 .5 12 3 7.500 8.500 8v3z" fill="#8e8e8e" />
        </Svg>
        <Caret className="text-[#777]" />
      </button>
      <button aria-label="Job status" className="ml-auto">
        <Svg size={14} className="size-[14px]">
          <circle cx="7" cy="7" r="5.600" fill="#e4e4e4" stroke="#444" strokeWidth="1.400" />
          <path d="M7 3.500V7h3" stroke="#444" strokeWidth="1.300" />
          <circle cx="10.500" cy="10.500" r="2.800" fill="#f04a4a" />
        </Svg>
      </button>
      <button className="ml-[23px] flex items-center gap-[5px] text-[8px] text-[#444]">
        anamularefin
        <Caret />
      </button>
      <button aria-label="Help" className="ml-[19px] flex items-center gap-[3px]">
        <span className="flex size-[12px] items-center justify-center rounded-full bg-[#5a5a5a] text-[9px] leading-none font-bold text-white">?</span>
        <Caret />
      </button>
    </div>
  );
}

function DocumentTabs() {
  return (
    <div className="flex h-[17px] shrink-0 items-stretch border-b border-[#a8a8a8] bg-[#d6d6d6]">
      <div className="flex w-[156px] items-center border-r border-[#999] bg-[#ebebeb] pt-[2px] pr-[6px] pl-[7px]">
        <Svg size={14} className="size-[14px]">
          <path d="m1 3.500 7-2.500 5 2-5.500 2.500z" fill="#aaa" />
          <path d="M1 3.500 7.500 5.500V13L1 9.500z" fill="#666" />
          <path d="m7.500 5.500 5.500-2.500v6.500L7.500 13z" fill="#434343" />
        </Svg>
        <a href="#document" className="ml-[8px] pt-[2px] font-['Liberation_Sans',sans-serif] text-[9px] font-bold text-[#555]">
          stand_shopbot v11*
        </a>
        <button aria-label="Close tab" className="ml-auto">
          <X className="size-[10px] text-[#777]" strokeWidth={4} />
        </button>
      </div>
      <button aria-label="New tab" className="ml-[5px] flex items-center pt-px">
        <Svg size={11} className="size-[11px]">
          <path d="M5.500 1v9M1 5.500h9" stroke="#777" strokeWidth="1.400" />
        </Svg>
      </button>
    </div>
  );
}

export default function App() {
  return (
    <div className="flex h-screen flex-col overflow-hidden bg-[#ececec] font-[Roboto,sans-serif]">
      <SharedDefs />
      <TitleBar />
      <QuickAccess />
      <DocumentTabs />

      <main className="relative flex min-h-0 flex-1 flex-col pt-[3px]">
        <svg
          viewBox="0 59 1200 546"
          preserveAspectRatio="xMidYMid slice"
          className="absolute inset-0 size-full"
          role="img"
          aria-label="Wooden laptop stand on the ground plane"
        >
          <Grid />
          <WoodModel />
        </svg>

        <Ribbon />

        <aside className="relative mt-[3px] ml-[3px] w-[235px]">
          <PanelHeader title="BROWSER" />
          <ul className="mt-[5px] -ml-[3px] flex h-[353px] flex-col justify-between">
            {TREE.map((node, i) => (
              <TreeRow key={i} node={node} />
            ))}
          </ul>
        </aside>

        <div className="absolute top-[3px] right-[8px]">
          <ViewCube />
        </div>

        <div className="relative mt-auto mb-[4px] ml-[3px]">
          <PanelHeader title="COMMENTS" collapsed />
        </div>
        <ViewControls />
      </main>

      <Timeline />
    </div>
  );
}
